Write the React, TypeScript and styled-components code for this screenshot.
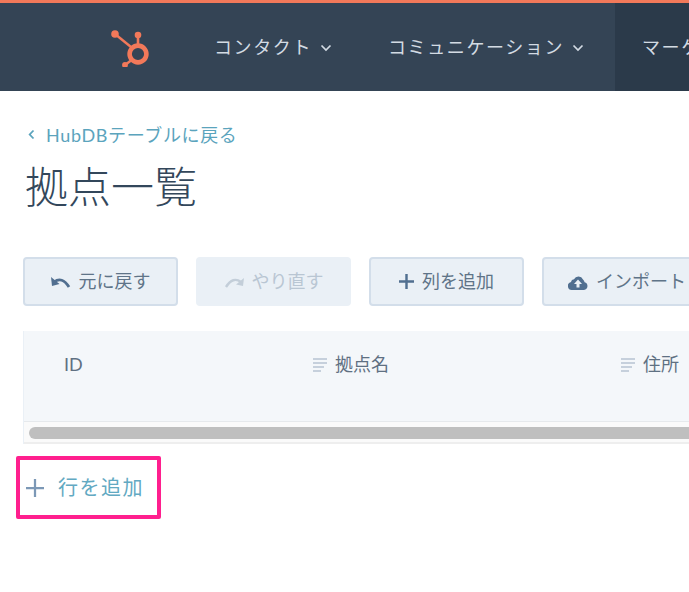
import React from 'react';
import styled, { createGlobalStyle } from 'styled-components';

const GlobalStyle = createGlobalStyle`
  html, body {
    margin: 0;
    padding: 0;
    background: #fff;
    overflow: hidden;
  }
  body {
    font-family: "Lato", "Noto Sans CJK JP", sans-serif;
  }
`;

const Page = styled.div`
  width: 689px;
  height: 592px;
  overflow: hidden;
  background: #fff;
`;

const NavBar = styled.header`
  display: flex;
  align-items: stretch;
  height: 88px;
  border-top: 3px solid #f2795a;
  background: #344455;
  padding-left: 110px;
`;

const LogoWrap = styled.div`
  display: flex;
  align-items: center;
  width: 104px;
  flex-shrink: 0;
`;

const NavItem = styled.div<{ $active?: boolean; $width: number; $pad: number }>`
  display: flex;
  align-items: center;
  gap: 8px;
  flex-shrink: 0;
  width: ${(p) => p.$width}px;
  padding: 0 0 3px ${(p) => p.$pad}px;
  box-sizing: border-box;
  background: ${(p) => (p.$active ? '#2b3a4a' : 'transparent')};
  color: #d3dbe3;
  font-size: 18px;
  letter-spacing: 1.6px;
  white-space: nowrap;
  overflow: hidden;
`;

const Main = styled.main`
  padding: 31px 0 0 23px;
`;

const BackLink = styled.a`
  display: flex;
  align-items: center;
  gap: 11px;
  height: 24px;
  padding-left: 5px;
  color: #5ba4bd;
  font-size: 18px;
  letter-spacing: 0.65px;
`;

const Title = styled.h1`
  margin: 16px 0 0;
  height: 50px;
  line-height: 50px;
  font-size: 43px;
  font-weight: 300;
  color: #33475b;
  padding-left: 2px;
`;

const Toolbar = styled.div`
  display: flex;
  gap: 18px;
  margin-top: 45px;
  width: 720px;
`;

const ToolButton = styled.div<{ $disabled?: boolean; $start?: boolean }>`
  display: flex;
  align-items: center;
  justify-content: ${(p) => (p.$start ? 'flex-start' : 'center')};
  gap: 8px;
  box-sizing: border-box;
  width: 155px;
  height: 49px;
  padding-left: ${(p) => (p.$start ? '24px' : '0')};
  flex-shrink: 0;
  border: 2px solid ${(p) => (p.$disabled ? '#eaf0f6' : '#d3deea')};
  border-radius: 4px;
  background: #eaf0f6;
  color: ${(p) => (p.$disabled ? '#b9c6d3' : '#5f7488')};
  font-size: 18px;
  white-space: nowrap;
`;

const ButtonLabel = styled.span`
  margin-bottom: 4px;
`;

const Table = styled.div`
  margin-top: 25px;
  width: 720px;
  border-left: 1px solid #eaf0f6;
`;

const HeaderRow = styled.div`
  display: flex;
  height: 90px;
  box-sizing: border-box;
  padding-top: 21px;
  background: #f4f7fa;
  color: #5f7082;
  font-size: 18px;
`;

const HeaderCell = styled.div<{ $width: number; $pad: number }>`
  display: flex;
  align-items: flex-start;
  gap: 8px;
  height: 26px;
  line-height: 24px;
  width: ${(p) => p.$width}px;
  padding-left: ${(p) => p.$pad}px;
  box-sizing: border-box;
  flex-shrink: 0;
`;

const ScrollTrack = styled.div`
  box-sizing: border-box;
  height: 23px;
  padding: 5px 0 5px 5px;
  background: #fafafa;
  border-top: 1px solid #e6e9ec;
  border-bottom: 2px solid #eeeeee;
`;

const ScrollThumb = styled.div`
  height: 12px;
  border-radius: 6px 0 0 6px;
  background: #bfbfbf;
`;

const AddRow = styled.div`
  display: flex;
  align-items: center;
  gap: 14px;
  box-sizing: border-box;
  width: 145px;
  height: 63px;
  margin: 12px 0 0 -7px;
  padding-left: 6px;
  border: 4px solid #ff1f8e;
  border-radius: 2px;
  color: #62a9c2;
  font-size: 20px;
  letter-spacing: 1.5px;
`;

const AddLabel = styled.span`
  margin-bottom: 2px;
`;

const ColumnIcon = styled.svg`
  margin-top: 5px;
  flex-shrink: 0;
`;

const Sprocket = () => (
  <svg width="42" height="40" viewBox="0 0 42 40" fill="none">
    <circle cx="5" cy="7" r="3.8" fill="#f2795a" />
    <circle cx="28" cy="8" r="3.3" fill="#f2795a" />
    <circle cx="15" cy="38" r="2.9" fill="#f2795a" />
    <path d="M5 7 L21 20" stroke="#f2795a" strokeWidth="2.4" />
    <path d="M28 8 V18" stroke="#f2795a" strokeWidth="2.6" />
    <path d="M15 38 L23 32" stroke="#f2795a" strokeWidth="2.6" />
    <circle cx="28" cy="27" r="8.4" stroke="#f2795a" strokeWidth="4.6" />
  </svg>
);

const Chevron = ({ color = '#d3dbe3' }: { color?: string }) => (
  <svg width="12" height="8" viewBox="0 0 12 8" fill="none" style={{ marginTop: 4 }}>
    <path d="M1.5 1.5 L6 6 L10.5 1.5" stroke={color} strokeWidth="1.7" />
  </svg>
);

const BackChevron = () => (
  <svg width="7" height="11" viewBox="0 0 7 11" fill="none">
    <path d="M5.5 1.5 L1.7 5.5 L5.5 9.5" stroke="#5ba4bd" strokeWidth="1.8" />
  </svg>
);

const UndoIcon = ({ color }: { color: string }) => (
  <svg width="20" height="12" viewBox="0 0 20 12" fill="none">
    <path d="M3 6 Q11 0 18 11" stroke={color} strokeWidth="2.8" />
    <path d="M0 1 L1 10 L8.5 8 Z" fill={color} />
  </svg>
);

const RedoIcon = ({ color }: { color: string }) => (
  <svg width="20" height="12" viewBox="0 0 20 12" fill="none">
    <path d="M17 6 Q9 0 2 11" stroke={color} strokeWidth="2.4" />
    <path d="M20 2 L19 10 L12 8.5 Z" fill={color} />
  </svg>
);

const PlusIcon = ({ size, color, width = 2.6 }: { size: number; color: string; width?: number }) => (
  <svg width={size} height={size} viewBox="0 0 16 16" fill="none" style={{ flexShrink: 0 }}>
    <path d="M8 0 V16 M0 8 H16" stroke={color} strokeWidth={width} />
  </svg>
);

const CloudIcon = () => (
  <svg width="20" height="16" viewBox="0 0 20 16" style={{ flexShrink: 0 }}>
    <path
      fillRule="evenodd"
      fill="#516f90"
      d="M4 16 A4 4 0 0 1 3 8.1 A3.4 3.4 0 0 1 6 5.2 A5 5 0 0 1 15 5.5 A5.4 5.4 0 0 1 16.6 8.2 A4 4 0 0 1 16 16 Z M10 5.5 L6 10 H8.5 V13.5 H11.5 V10 H14 Z"
    />
  </svg>
);

const TextColumnIcon = () => (
  <ColumnIcon width="14" height="16" viewBox="0 0 14 16" fill="none">
    <path d="M0 2 H14 M0 6 H14 M0 10 H11 M0 14 H8" stroke="#b6c4d2" strokeWidth="1.6" />
  </ColumnIcon>
);

const App: React.FC = () => {
  return (
    <Page>
      <GlobalStyle />
      <NavBar>
        <LogoWrap>
          <Sprocket />
        </LogoWrap>
        <NavItem $width={174} $pad={0}>
          コンタクト <Chevron />
        </NavItem>
        <NavItem $width={227} $pad={0}>
          コミュニケーション <Chevron />
        </NavItem>
        <NavItem $active $width={74} $pad={27}>
          マーケティング
        </NavItem>
      </NavBar>
      <Main>
        <BackLink>
          <BackChevron />
          HubDBテーブルに戻る
        </BackLink>
        <Title>拠点一覧</Title>
        <Toolbar>
          <ToolButton>
            <UndoIcon color="#516f90" />
            <ButtonLabel>元に戻す</ButtonLabel>
          </ToolButton>
          <ToolButton $disabled>
            <RedoIcon color="#c3ced9" />
            <ButtonLabel>やり直す</ButtonLabel>
          </ToolButton>
          <ToolButton>
            <PlusIcon size={15} color="#516f90" />
            <ButtonLabel>列を追加</ButtonLabel>
          </ToolButton>
          <ToolButton $start>
            <CloudIcon />
            <ButtonLabel>インポート</ButtonLabel>
          </ToolButton>
        </Toolbar>
        <Table>
          <HeaderRow>
            <HeaderCell $width={289} $pad={40}>ID</HeaderCell>
            <HeaderCell $width={308} $pad={0}>
              <TextColumnIcon />
              拠点名
            </HeaderCell>
            <HeaderCell $width={120} $pad={0}>
              <TextColumnIcon />
              住所
            </HeaderCell>
          </HeaderRow>
          <ScrollTrack>
            <ScrollThumb />
          </ScrollTrack>
        </Table>
        <AddRow>
          <PlusIcon size={18} color="#7c98b6" width={2} />
          <AddLabel>行を追加</AddLabel>
        </AddRow>
      </Main>
    </Page>
  );
};

export default App;
